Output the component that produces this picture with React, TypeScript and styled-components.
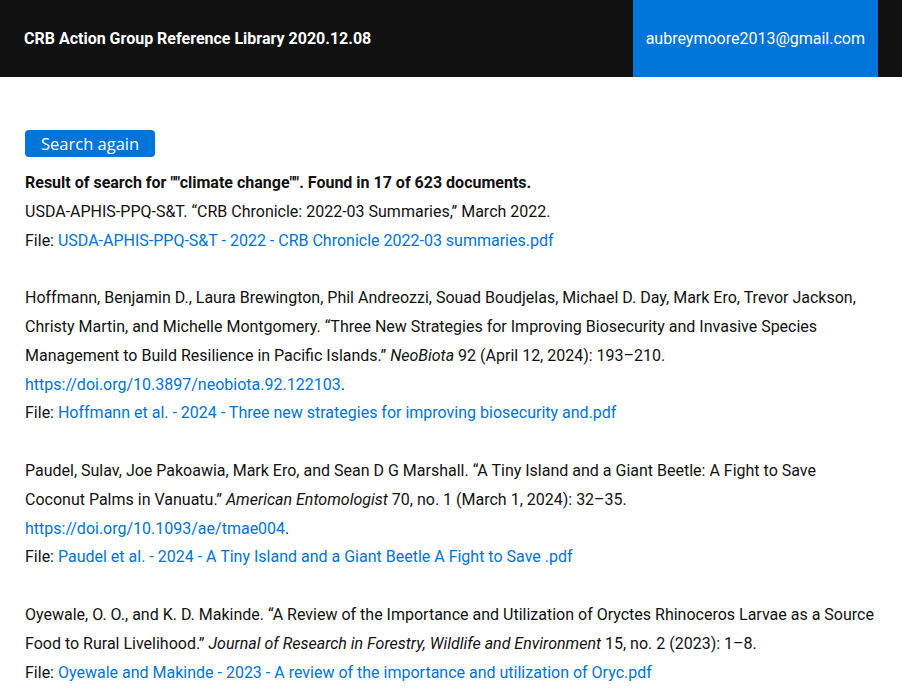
import React from 'react'
import styled, { createGlobalStyle } from 'styled-components'

const GlobalStyle = createGlobalStyle`
  body {
    margin: 0;
    background: #fff;
    font-family: Roboto, "Liberation Sans", sans-serif;
    color: #111;
  }
`

type Entry = {
  before: string
  journal?: string
  after?: string
  doi?: string
  file: string
}

const entries: Entry[] = [
  {
    before: 'Hoffmann, Benjamin D., Laura Brewington, Phil Andreozzi, Souad Boudjelas, Michael D. Day, Mark Ero, Trevor Jackson, Christy Martin, and Michelle Montgomery. “Three New Strategies for Improving Biosecurity and Invasive Species Management to Build Resilience in Pacific Islands.” ',
    journal: 'NeoBiota',
    after: ' 92 (April 12, 2024): 193–210.',
    doi: 'https://doi.org/10.3897/neobiota.92.122103',
    file: 'Hoffmann et al. - 2024 - Three new strategies for improving biosecurity and.pdf',
  },
  {
    before: 'Paudel, Sulav, Joe Pakoawia, Mark Ero, and Sean D G Marshall. “A Tiny Island and a Giant Beetle: A Fight to Save Coconut Palms in Vanuatu.” ',
    journal: 'American Entomologist',
    after: ' 70, no. 1 (March 1, 2024): 32–35.',
    doi: 'https://doi.org/10.1093/ae/tmae004',
    file: 'Paudel et al. - 2024 - A Tiny Island and a Giant Beetle A Fight to Save .pdf',
  },
  {
    before: 'Oyewale, O. O., and K. D. Makinde. “A Review of the Importance and Utilization of Oryctes Rhinoceros Larvae as a Source Food to Rural Livelihood.” ',
    journal: 'Journal of Research in Forestry, Wildlife and Environment',
    after: ' 15, no. 2 (2023): 1–8.',
    file: 'Oyewale and Makinde - 2023 - A review of the importance and utilization of Oryc.pdf',
  },
]

const App: React.FC = () => {
  return (
    <>
      <GlobalStyle />
      <Header>
        <Title>CRB Action Group Reference Library 2020.12.08</Title>
        <Account>aubreymoore2013@gmail.com</Account>
      </Header>
      <Main>
        <SearchButton>Search again</SearchButton>
        <Summary>Result of search for ""climate change"". Found in 17 of 623 documents.</Summary>
        <Result>
          USDA-APHIS-PPQ-S&amp;T. “CRB Chronicle: 2022-03 Summaries,” March 2022.
          <br />
          File: <Link href="#">USDA-APHIS-PPQ-S&amp;T - 2022 - CRB Chronicle 2022-03 summaries.pdf</Link>
        </Result>
        {entries.map((e) => (
          <Result key={e.file}>
            {e.before}
            {e.journal && <i>{e.journal}</i>}
            {e.after}
            {e.doi && (
              <>
                {' '}
                <Link href="#">{e.doi}</Link>.
              </>
            )}
            <br />
            File: <Link href="#">{e.file}</Link>
          </Result>
        ))}
      </Main>
    </>
  )
}

const Header = styled.header`
  display: flex;
  align-items: stretch;
  justify-content: space-between;
  height: 77px;
  padding: 0 24px;
  background: #111;
  color: #fff;
`

const Title = styled.div`
  display: flex;
  align-items: center;
  font-size: 16px;
  font-weight: bold;
`

const Account = styled.div`
  display: flex;
  align-items: center;
  padding: 0 13px;
  background: #0074d9;
  font-size: 16px;
`

const Main = styled.main`
  padding: 53px 25px 0 25px;
  font-size: 16px;
  line-height: 28.8px;
`

const SearchButton = styled.button`
  display: block;
  height: 27px;
  padding: 0 16px;
  margin-bottom: 12px;
  border: none;
  border-radius: 4px;
  background: #0074d9;
  color: #fff;
  font-family: "Open Sans", "Noto Sans", sans-serif;
  font-size: 16.5px;
  cursor: pointer;
`

const Summary = styled.div`
  font-weight: bold;
`

const Result = styled.p`
  margin: 0 0 28.8px 0;
`

const Link = styled.a`
  color: #0074d9;
  text-decoration: none;
`

export default App
